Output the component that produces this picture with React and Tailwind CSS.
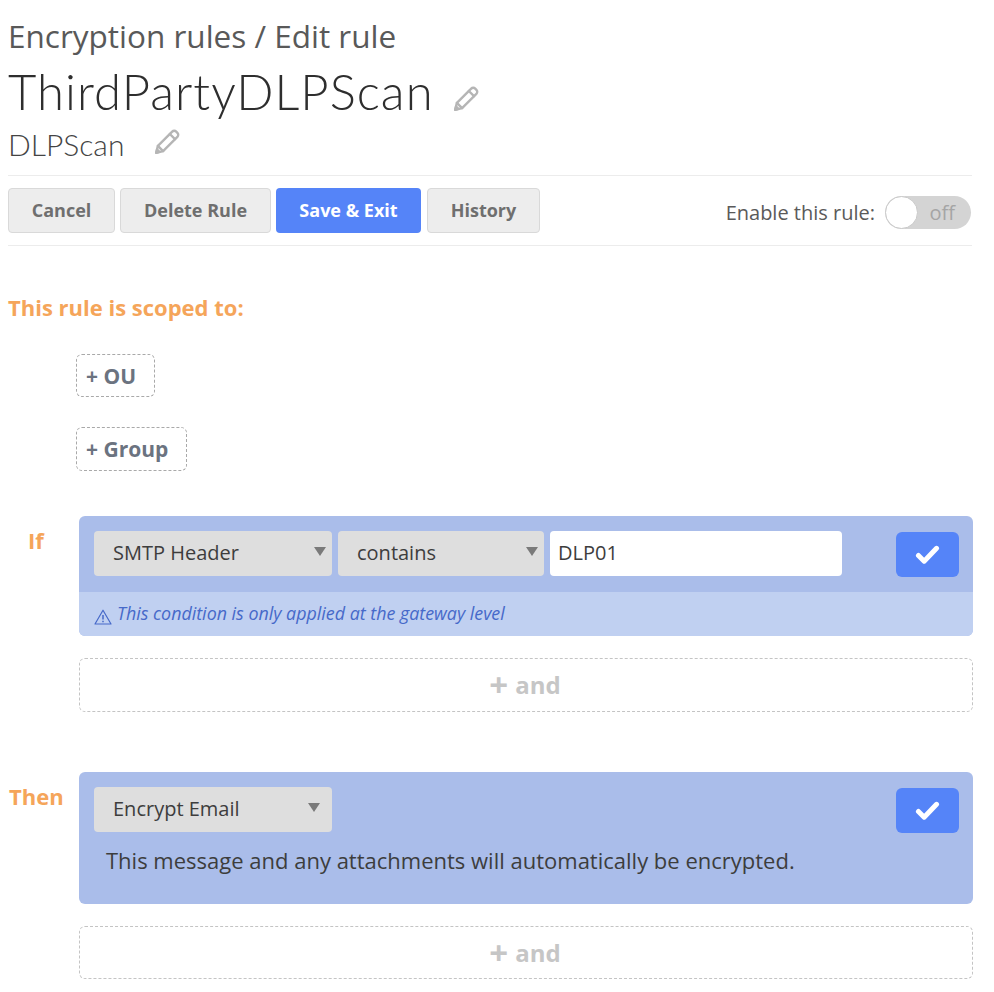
import React from "react";

const Pencil = ({ className }) => (
  <svg viewBox="0 0 24 24" className={className} fill="none" stroke="#b5b5b5" strokeWidth="2.2" strokeLinejoin="round" strokeLinecap="round">
    <path d="M2 22l1.6-6.4L16.8 2.4a2.6 2.6 0 0 1 3.7 0l1.1 1.1a2.6 2.6 0 0 1 0 3.7L8.4 20.4z" />
    <path d="M14.6 4.6l4.8 4.8" />
    <path d="M3.6 15.6l4.8 4.8" />
    <path d="M2 22l3-.8-2.2-2.2z" fill="#b5b5b5" />
  </svg>
);

const Check = () => (
  <svg viewBox="0 0 26 22" className="w-[25px] h-[21px]" fill="none" stroke="#ffffff" strokeWidth="5.2" strokeLinecap="round" strokeLinejoin="round">
    <path d="M3.5 12l6 6L22.5 4.5" />
  </svg>
);

const Btn = ({ children, className }) => (
  <button className={`h-[45px] rounded-[4px] border border-[#d9d9d9] bg-[#ededed] text-[#6f6f6f] text-[18px] font-bold ${className}`}>{children}</button>
);

const Select = ({ label, className }) => (
  <div className={`h-[45px] shrink-0 rounded-[4px] bg-[#dedede] flex items-center justify-between pl-[19px] pb-[2px] text-[20px] text-[#3d3d3d] ${className}`}>
    <span>{label}</span>
    <span className="w-0 h-0 border-l-[6px] border-r-[6px] border-t-[9px] border-l-transparent border-r-transparent border-t-[#7a7a7a] mb-[2px]" />
  </div>
);

const Scope = ({ label, className }) => (
  <button className={`block ml-[68px] rounded-[6px] border border-dashed border-[#a9a9a9] text-left pl-[9px] pt-[2px] text-[21px] font-bold text-[#6b7380] ${className}`}>{label}</button>
);

const AddAnd = ({ className }) => (
  <div className={`ml-[71px] w-[894px] shrink-0 rounded-[6px] border border-dashed border-[#c4c4c4] flex items-center justify-center pr-[2px] text-[24px] font-bold text-[#c6c6c6] ${className}`}>
    <span className="text-[33px] leading-[0] mr-[7px]">+</span>and
  </div>
);

const Label = ({ children, className }) => (
  <div className={`w-[71px] shrink-0 pt-[9px] text-[22px] leading-[30px] font-bold text-[#f5a55a] ${className}`}>{children}</div>
);

export default function App() {
  return (
    <div className="w-[994px] h-[992px] bg-white px-2 overflow-hidden" style={{ fontFamily: '"Open Sans", sans-serif' }}>
      <div className="w-[964px]">
        <div className="pt-[16px] text-[31.5px] leading-[40px] text-[#595959]">Encryption rules / Edit rule</div>
        <div className="mt-[4px] flex items-center h-[64px]">
          <span className="text-[49px] leading-[64px] text-[#2e2e2e] font-light tracking-[1.05px] mb-[2px]" style={{ fontFamily: "Lato, sans-serif" }}>ThirdPartyDLPScan</span>
          <Pencil className="ml-[19px] mt-[14px] w-[26px] h-[26px]" />
        </div>
        <div className="mt-[1px] flex items-center h-[40px]">
          <span className="text-[30px] leading-[40px] text-[#444444] font-light mb-[2px]" style={{ fontFamily: "Lato, sans-serif" }}>DLPScan</span>
          <Pencil className="ml-[30px] mb-[6px] w-[26px] h-[26px]" />
        </div>
        <div className="mt-[10px] h-[71px] border-y border-[#ececec] flex items-center justify-between">
          <div className="flex gap-[5px] items-center">
            <Btn className="w-[107px]">Cancel</Btn>
            <Btn className="w-[151px]">Delete Rule</Btn>
            <button className="h-[45px] w-[145px] rounded-[4px] bg-[#5584f8] text-white text-[18px] font-bold">Save &amp; Exit</button>
            <Btn className="w-[113px] ml-[1px]">History</Btn>
          </div>
          <div className="flex items-center mt-[4px] mr-[1px]">
            <span className="text-[20px] text-[#5a5a5a]">Enable this rule:</span>
            <div className="relative ml-[10px] w-[86px] h-[33px] rounded-full bg-[#d4d4d4] flex items-center justify-end pr-[16px] text-[20px] text-[#a5a5a5]">
              off
              <span className="absolute left-0 top-0 w-[33px] h-[33px] rounded-full bg-white border border-[#c9c9c9]" />
            </div>
          </div>
        </div>
        <div className="mt-[46px] text-[22px] leading-[30px] font-bold text-[#f5a55a]">This rule is scoped to:</div>
        <Scope label="+ OU" className="mt-[32px] w-[79px] h-[43px]" />
        <Scope label="+ Group" className="mt-[30px] w-[111px] h-[44px]" />

        <div className="mt-[45px] flex items-start">
          <Label className="pl-[20px]">If</Label>
          <div className="w-[894px] h-[120px] shrink-0 rounded-[6px] overflow-hidden bg-[#aabdea]">
            <div className="h-[76px] pt-[15px] pl-[15px] flex items-start gap-[6px]">
              <Select label="SMTP Header" className="w-[238px] pr-[6px]" />
              <Select label="contains" className="w-[206px] pr-[6px]" />
              <div className="w-[292px] h-[45px] shrink-0 rounded-[4px] bg-white flex items-center pl-[8px] pb-[2px] text-[20px] text-[#3d3d3d]">DLP01</div>
              <button className="ml-[48px] mt-[1px] w-[63px] h-[45px] rounded-[6px] bg-[#5584f8] flex items-center justify-center"><Check /></button>
            </div>
            <div className="h-[44px] bg-[#c0d0f1] pl-[15px] flex items-center text-[17.85px] italic text-[#4669c9]">
              <svg viewBox="0 0 18 16" className="w-[18px] h-[16px] mt-[5px] mr-[5px]" fill="none" stroke="#4669c9" strokeWidth="1.2" strokeLinejoin="round">
                <path d="M9 1.2L17 15H1z" />
                <path d="M9 6v4.5M9 11.8v1.4" strokeWidth="1.5" />
              </svg>
              <span className="mb-[2px]">This condition is only applied at the gateway level</span>
            </div>
          </div>
        </div>
        <AddAnd className="mt-[22px] h-[54px]" />

        <div className="mt-[60px] flex items-start">
          <Label className="pl-[1px]">Then</Label>
          <div className="w-[894px] h-[132px] shrink-0 rounded-[6px] bg-[#aabdea] pt-[15px] pl-[15px] pr-[14px]">
            <div className="flex items-start justify-between">
              <Select label="Encrypt Email" className="w-[238px] pr-[12px]" />
              <button className="mt-[1px] w-[63px] h-[45px] rounded-[6px] bg-[#5584f8] flex items-center justify-center"><Check /></button>
            </div>
            <div className="mt-[12px] pl-[12px] text-[22px] leading-[30px] text-[#3d3d3d]">This message and any attachments will automatically be encrypted.</div>
          </div>
        </div>
        <AddAnd className="mt-[22px] h-[53px]" />
      </div>
    </div>
  );
}
